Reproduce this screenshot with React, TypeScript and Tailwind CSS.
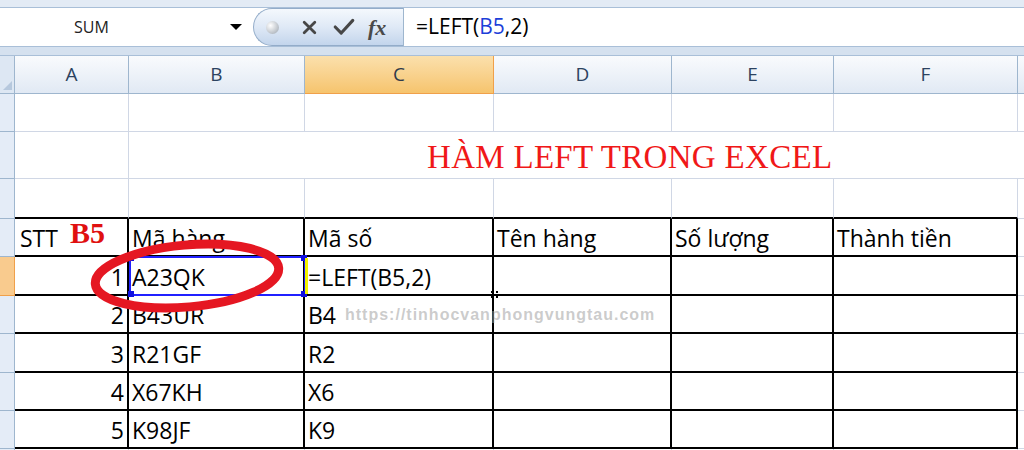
import React from "react";

const W = ["w-[114px]", "w-[176px]", "w-[189px]", "w-[178px]", "w-[162px]", "w-[184px]"];
const HEAD = ["A", "B", "C", "D", "E", "F"];

type Row = { h: string; kind: "plain" | "title" | "top" | "table"; cells?: string[]; sel?: boolean };

const ROWS: Row[] = [
  { h: "h-[38px]", kind: "plain" },
  { h: "h-[47px]", kind: "title" },
  { h: "h-[40px]", kind: "top" },
  { h: "h-[38px]", kind: "table", cells: ["STT", "Mã hàng", "Mã số", "Tên hàng", "Số lượng", "Thành tiền"] },
  { h: "h-[39px]", kind: "table", cells: ["1", "A23QK", "=LEFT(B5,2)"], sel: true },
  { h: "h-[38px]", kind: "table", cells: ["2", "B43UR", "B4"] },
  { h: "h-[39px]", kind: "table", cells: ["3", "R21GF", "R2"] },
  { h: "h-[38px]", kind: "table", cells: ["4", "X67KH", "X6"] },
  { h: "h-[38px]", kind: "table", cells: ["5", "K98JF", "K9"] },
  { h: "h-[10px]", kind: "plain" },
];

function FormulaBar() {
  return (
    <div className="flex h-[38px] bg-white">
      <div className="relative flex w-[253px] shrink-0 items-center bg-white">
        <span className="pl-[74px] text-[16px] text-[#222]">SUM</span>
        <span className="absolute left-[230px] top-[16px] h-0 w-0 border-x-[6px] border-t-[6px] border-x-transparent border-t-black" />
      </div>
      <div className="flex w-[150px] shrink-0 items-center rounded-l-full border border-r-0 border-[#93acc9] bg-gradient-to-b from-[#f4f8fd] via-[#dfe9f6] to-[#c3d5ec]">
        <span className="ml-[12px] h-[13px] w-[13px] rounded-full bg-[radial-gradient(circle_at_35%_35%,#ffffff,#9aa3ad)]" />
        <svg viewBox="0 0 16 16" className="ml-[22px] h-[17px] w-[17px]">
          <path d="M3 3 L13 13 M13 3 L3 13" stroke="#474747" strokeWidth="2.6" strokeLinecap="round" />
        </svg>
        <svg viewBox="0 0 20 16" className="ml-[15px] h-[18px] w-[22px]">
          <path d="M2 8 L7.5 13.5 L18 2" stroke="#474747" strokeWidth="2.8" fill="none" strokeLinecap="round" strokeLinejoin="round" />
        </svg>
        <span className="ml-[13px] text-[22px] font-bold italic text-[#4a4a4a] [font-family:'Liberation_Serif',serif]">fx</span>
      </div>
      <div className="flex flex-1 items-center border-l border-[#9eb6ce] pl-[12px] text-[21px] [font-family:'Open_Sans',sans-serif]">
        <span className="text-black">=LEFT(</span>
        <span className="text-[#1c3fd9]">B5</span>
        <span className="text-black">,2)</span>
      </div>
    </div>
  );
}

function cellBorder(kind: Row["kind"]) {
  if (kind === "table") return "border-r-2 border-b-2 border-black";
  if (kind === "top") return "border-r border-b-2 border-r-[#d0d7e5] border-b-black";
  return "border-r border-b border-[#d0d7e5]";
}

export default function App() {
  return (
    <div className="relative h-[450px] w-[1024px] overflow-hidden bg-white [font-family:'Open_Sans',sans-serif]">
      <div className="h-[8px] border-b border-[#a9bfd8] bg-[#e3ebf5]" />
      <FormulaBar />
      <div className="h-[10px] border-y border-[#a9bfd8] bg-[#d5e1ef]" />

      {/* column headers */}
      <div className="flex h-[38px]">
        <div className="relative w-[15px] shrink-0 border-r border-b border-[#9eb6ce] bg-[#dde7f3]">
          <span className="absolute right-[2px] bottom-[3px] h-0 w-0 rotate-90 border-l-[9px] border-t-[9px] border-l-transparent border-t-[#b6c8dd]" />
        </div>
        {HEAD.map((c, i) => (
          <div
            key={c}
            className={`${W[i]} flex shrink-0 items-center justify-center border-r border-b text-[19px] ${
              c === "C"
                ? "border-[#f0a04a] bg-gradient-to-b from-[#fbe0ac] to-[#f6c46d] text-[#2f3a4a]"
                : "border-[#9eb6ce] bg-gradient-to-b from-[#f9fbfd] to-[#e1e9f4] text-[#2c4260]"
            }`}
          >
            {c}
          </div>
        ))}
        <div className="flex-1 border-b border-[#9eb6ce] bg-gradient-to-b from-[#f9fbfd] to-[#e1e9f4]" />
      </div>

      {ROWS.map((r, ri) => (
        <div key={ri} className={`flex ${r.h}`}>
          <div
            className={`w-[15px] shrink-0 border-r border-b ${
              r.sel ? "border-[#f0a04a] bg-[#f9cb8e]" : "border-[#9eb6ce] bg-[#e4ecf7]"
            }`}
          />
          {r.kind === "title" ? (
            <>
              <div className={`${W[0]} shrink-0 border-r border-b border-[#d0d7e5]`} />
              <div className="flex flex-1 items-center border-b border-[#d0d7e5] pl-[298px] pt-[4px]">
                <span className="text-[33px] leading-none tracking-[0.3px] text-[#f01818] [font-family:'Liberation_Serif',serif]">HÀM LEFT TRONG EXCEL</span>
              </div>
            </>
          ) : (
            <>
              {W.map((w, i) => {
                const t = r.cells?.[i] ?? "";
                const num = i === 0 && ri > 3;
                return (
                  <div
                    key={i}
                    className={`${w} flex shrink-0 items-end overflow-visible whitespace-nowrap pb-[2px] text-[23px] leading-[30px] text-black ${cellBorder(r.kind)} ${
                      num ? "justify-end pr-[3px]" : i === 0 ? "pl-[5px]" : "pl-[3px]"
                    }`}
                  >
                    {t}
                    {ri === 3 && i === 0 && (
                      <span className="mb-[5px] ml-[12px] text-[30px] font-bold leading-none text-[#e01010] [font-family:'Liberation_Serif',serif]">B5</span>
                    )}
                  </div>
                );
              })}
              <div className="flex-1 border-b border-[#d0d7e5]" />
            </>
          )}
        </div>
      ))}

      {/* B5 reference highlight */}
      <div className="absolute left-[129px] top-[256px] h-[40px] w-[177px] border-2 border-[#2020ff]">
        <span className="absolute -left-[3px] -top-[3px] h-[6px] w-[6px] bg-[#1010e0]" />
        <span className="absolute -bottom-[3px] -left-[3px] h-[6px] w-[6px] bg-[#1010e0]" />
        <span className="absolute -right-[3px] -top-[3px] h-[6px] w-[6px] bg-[#1010e0]" />
        <span className="absolute -bottom-[3px] -right-[3px] h-[6px] w-[6px] bg-[#1010e0]" />
      </div>
      <div className="absolute left-[305px] top-[258px] h-[36px] w-[3px] bg-[#f2f200]" />
      <div className="absolute left-[491px] top-[291px] h-[7px] w-[7px] border-2 border-dotted border-black" />

      {/* red hand-drawn ellipse */}
      <svg className="pointer-events-none absolute left-0 top-0" width="1024" height="450">
        <ellipse cx="187" cy="276" rx="92" ry="31" fill="none" stroke="#e51722" strokeWidth="9" transform="rotate(-5 187 276)" />
      </svg>

      <span className="pointer-events-none absolute left-[345px] top-[303px] text-[16px] font-bold tracking-[1px] text-[#a0a0a0]/55 [font-family:'Liberation_Sans',sans-serif]">
        https://tinhocvanphongvungtau.com
      </span>
    </div>
  );
}
